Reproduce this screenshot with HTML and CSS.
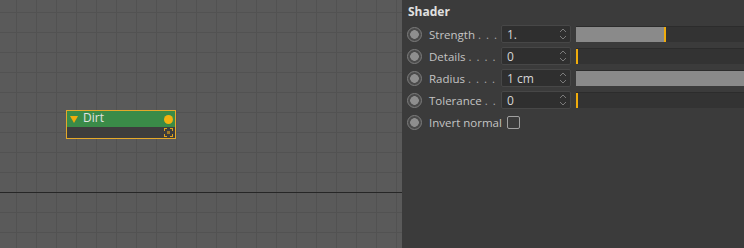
FILE: index.html
```html
<!DOCTYPE html>
<html>
<head>
<meta charset="utf-8">
<link rel="stylesheet" href="styles.css">
</head>
<body>
<div class="app">
  <div class="canvas">
    <div class="canvas-top"></div>
    <div class="node">
      <div class="node-head">
        <svg class="node-tri" width="8" height="7" viewBox="0 0 8 7"><path d="M0 0H8L4 7Z" fill="#f0ac0c"/></svg>
        <span class="node-title">Dirt</span>
        <span class="node-port"></span>
      </div>
      <div class="node-body">
        <svg class="node-exp" width="9" height="9" viewBox="0 0 9 9" fill="#e0a21a">
          <rect x="0" y="0" width="3" height="1"/><rect x="0" y="0" width="1" height="3"/>
          <rect x="6" y="0" width="3" height="1"/><rect x="8" y="0" width="1" height="3"/>
          <rect x="0" y="8" width="3" height="1"/><rect x="0" y="6" width="1" height="3"/>
          <rect x="6" y="8" width="3" height="1"/><rect x="8" y="6" width="1" height="3"/>
          <rect x="3" y="3" width="3" height="3" opacity="0.6"/>
        </svg>
      </div>
    </div>
  </div>
  <div class="panel">
    <div class="title">Shader</div>
    <div class="row">
      <span class="radio"></span><span class="label">Strength <span class="dots">. . .</span></span>
      <div class="field"><span class="val">1.</span><svg class="spin" width="8" height="14" viewBox="0 0 8 14"><path d="M1 5L4 2L7 5M1 9L4 12L7 9" fill="none" stroke="#7a7a7a" stroke-width="1"/></svg></div>
      <div class="slider"><div class="fill" style="width:88px"></div><div class="mark"></div></div>
    </div>
    <div class="row">
      <span class="radio"></span><span class="label">Details <span class="dots">. . . .</span></span>
      <div class="field"><span class="val">0</span><svg class="spin" width="8" height="14" viewBox="0 0 8 14"><path d="M1 5L4 2L7 5M1 9L4 12L7 9" fill="none" stroke="#7a7a7a" stroke-width="1"/></svg></div>
      <div class="slider"><div class="fill" style="width:0px"></div><div class="mark"></div></div>
    </div>
    <div class="row">
      <span class="radio"></span><span class="label">Radius <span class="dots">. . . .</span></span>
      <div class="field"><span class="val">1 cm</span><svg class="spin" width="8" height="14" viewBox="0 0 8 14"><path d="M1 5L4 2L7 5M1 9L4 12L7 9" fill="none" stroke="#7a7a7a" stroke-width="1"/></svg></div>
      <div class="slider"><div class="fill full"></div></div>
    </div>
    <div class="row">
      <span class="radio"></span><span class="label">Tolerance <span class="dots">. .</span></span>
      <div class="field"><span class="val">0</span><svg class="spin" width="8" height="14" viewBox="0 0 8 14"><path d="M1 5L4 2L7 5M1 9L4 12L7 9" fill="none" stroke="#7a7a7a" stroke-width="1"/></svg></div>
      <div class="slider"><div class="fill" style="width:0px"></div><div class="mark"></div></div>
    </div>
    <div class="row">
      <span class="radio"></span><span class="label auto">Invert normal</span>
      <span class="check"></span>
    </div>
  </div>
</div>
</body>
</html>
```
FILE: styles.css
```css
html, body {
  margin: 0;
  padding: 0;
  width: 744px;
  height: 248px;
  overflow: hidden;
  font-family: "Open Sans", "Noto Sans", sans-serif;
  font-size: 12px;
}
.app {
  display: flex;
  width: 744px;
  height: 248px;
}
.canvas {
  position: relative;
  width: 402px;
  height: 248px;
  background-color: #5a5a5a;
  background-image:
    linear-gradient(to right, #525252 1px, transparent 1px),
    linear-gradient(to bottom, #525252 1px, transparent 1px);
  background-size: 20px 20px;
  background-position: 16px 12px;
}
.canvas-top {
  height: 192px;
  border-bottom: 1px solid #262626;
}
.node {
  position: absolute;
  left: 66px;
  top: 110px;
  width: 108px;
  border: 1px solid #e4a92a;
  background: #3d3d3d;
}
.node-head {
  height: 16px;
  background: #3a8b48;
  display: flex;
  align-items: center;
  padding: 0 2px 0 2px;
}
.node-tri {
  margin-left: 1px;
  margin-top: 1px;
}
.node-title {
  color: #e2e2e2;
  font-size: 12px;
  margin-left: 5px;
  line-height: 14px;
  margin-bottom: 3px;
  flex: 1;
}
.node-port {
  width: 9px;
  height: 9px;
  border-radius: 50%;
  background: #f3b20f;
  margin-top: 1px;
}
.node-body {
  height: 11px;
  display: flex;
  justify-content: flex-end;
  align-items: flex-end;
  padding-right: 2px;
}
.node-exp {
  display: block;
  margin-bottom: 1px;
}
.panel {
  flex: 1;
  background: #3b3b3b;
  padding: 3px 0 0 5px;
  overflow: hidden;
}
.title {
  color: #e0e0e0;
  font-weight: bold;
  font-size: 12px;
  height: 20px;
  line-height: 18px;
  padding-left: 1px;
}
.row {
  display: flex;
  align-items: center;
  height: 22px;
}
.radio {
  width: 15px;
  height: 15px;
  border-radius: 50%;
  box-sizing: border-box;
  border: 1.5px solid #7c7c7c;
  background: radial-gradient(circle, #8e8e8e 0 4px, #4a4a4a 4.6px);
}
.label {
  color: #c4c4c4;
  width: 72px;
  margin-left: 7px;
  white-space: nowrap;
  font-size: 11.5px;
}
.dots {
  letter-spacing: 1px;
  color: #a8a8a8;
}
.label.auto {
  width: auto;
}
.field {
  width: 70px;
  height: 18px;
  box-sizing: border-box;
  border: 1px solid #474747;
  background: #2f2f2f;
  border-radius: 2px;
  display: flex;
  align-items: center;
  justify-content: space-between;
  padding: 0 3px 0 5px;
}
.val {
  color: #d6d6d6;
}
.spin {
  display: block;
}
.slider {
  flex: 1;
  height: 16px;
  margin-left: 5px;
  background: #333333;
  display: flex;
  align-items: stretch;
  border-top: 1px solid #2c2c2c;
  box-sizing: border-box;
}
.fill {
  background: #8a8a8a;
}
.fill.full {
  flex: 1;
}
.mark {
  width: 2px;
  background: #f0ac0c;
}
.check {
  width: 13px;
  height: 13px;
  box-sizing: border-box;
  border: 1px solid #a0a0a0;
  border-radius: 2px;
  margin-left: 5px;
}
```
